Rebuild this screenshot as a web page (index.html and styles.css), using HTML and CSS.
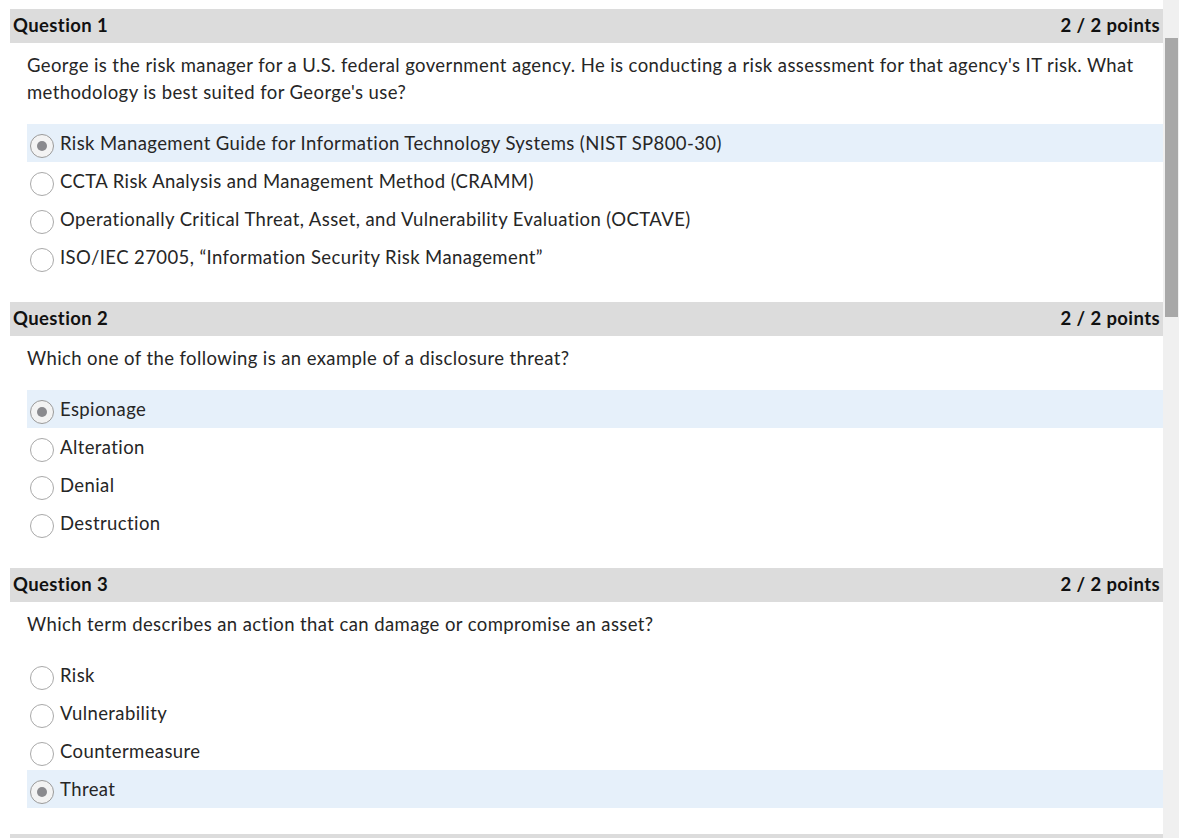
FILE: index.html
```html
<!DOCTYPE html>
<html lang="en">
<head>
<meta charset="utf-8">
<title>Quiz review</title>
<link rel="stylesheet" href="styles.css">
</head>
<body>
<div class="frame">
  <main class="page">
    <section class="question">
      <header class="q-head"><span class="q-title">Question 1</span><span class="q-points">2 / 2 points</span></header>
      <p class="q-text">George is the risk manager for a U.S. federal government agency. He is conducting a risk assessment for that agency's IT risk. What methodology is best suited for George's use?</p>
      <ul class="options">
        <li class="option selected"><span class="radio"></span><span class="label">Risk Management Guide for Information Technology Systems (NIST SP800-30)</span></li>
        <li class="option"><span class="radio"></span><span class="label">CCTA Risk Analysis and Management Method (CRAMM)</span></li>
        <li class="option"><span class="radio"></span><span class="label">Operationally Critical Threat, Asset, and Vulnerability Evaluation (OCTAVE)</span></li>
        <li class="option"><span class="radio"></span><span class="label">ISO/IEC 27005, “Information Security Risk Management”</span></li>
      </ul>
    </section>
    <section class="question">
      <header class="q-head"><span class="q-title">Question 2</span><span class="q-points">2 / 2 points</span></header>
      <p class="q-text">Which one of the following is an example of a disclosure threat?</p>
      <ul class="options">
        <li class="option selected"><span class="radio"></span><span class="label">Espionage</span></li>
        <li class="option"><span class="radio"></span><span class="label">Alteration</span></li>
        <li class="option"><span class="radio"></span><span class="label">Denial</span></li>
        <li class="option"><span class="radio"></span><span class="label">Destruction</span></li>
      </ul>
    </section>
    <section class="question">
      <header class="q-head"><span class="q-title">Question 3</span><span class="q-points">2 / 2 points</span></header>
      <p class="q-text">Which term describes an action that can damage or compromise an asset?</p>
      <ul class="options">
        <li class="option"><span class="radio"></span><span class="label">Risk</span></li>
        <li class="option"><span class="radio"></span><span class="label">Vulnerability</span></li>
        <li class="option"><span class="radio"></span><span class="label">Countermeasure</span></li>
        <li class="option selected"><span class="radio"></span><span class="label">Threat</span></li>
      </ul>
    </section>
    <section class="question">
      <header class="q-head"></header>
    </section>
  </main>
  <div class="scrollbar"><div class="thumb"></div></div>
</div>
</body>
</html>
```
FILE: styles.css
```css
html, body {
  margin: 0;
  padding: 0;
  height: 100%;
  overflow: hidden;
  background: #ffffff;
}
body {
  font-family: Lato, "Noto Sans", "Liberation Sans", sans-serif;
  color: #202122;
  font-size: 18.5px;
  letter-spacing: 0.4px;
}
.frame {
  display: flex;
  height: 838px;
}
.page {
  flex: 1;
  overflow: hidden;
  padding: 9px 0 0 10px;
}
.question {
  margin-bottom: 26px;
}
.q-head {
  box-sizing: border-box;
  display: flex;
  justify-content: space-between;
  align-items: center;
  height: 34px;
  background: #dcdcdc;
  padding: 0 3px 3px 3px;
  font-weight: 700;
  color: #111;
}
.q-text {
  margin: 9px 20px 18px 17px;
  line-height: 27px;
  color: #262626;
}
.options {
  list-style: none;
  margin: 0 0 0 17px;
  padding: 0;
}
.option {
  display: flex;
  align-items: center;
  height: 38px;
  color: #262626;
}
.option.selected {
  background: #e6f0fa;
}
.radio {
  box-sizing: border-box;
  width: 24px;
  height: 24px;
  margin: 6px 6px 0 3px;
  border: 1px solid #a9a9a9;
  border-radius: 50%;
  background: #ffffff;
  display: flex;
  align-items: center;
  justify-content: center;
  flex: none;
}
.option.selected .radio {
  background: #f3f3f3;
  border-color: #9a9a9a;
}
.option.selected .radio::after {
  content: "";
  width: 10px;
  height: 10px;
  border-radius: 50%;
  background: #8a8a8e;
}
.label {
  white-space: nowrap;
}
.scrollbar {
  width: 16px;
  flex: none;
  background: #f0f0f0;
  padding-top: 38px;
  box-sizing: border-box;
}
.thumb {
  margin-left: 2px;
  width: 13px;
  height: 279px;
  background: #a8a8a8;
}
```
